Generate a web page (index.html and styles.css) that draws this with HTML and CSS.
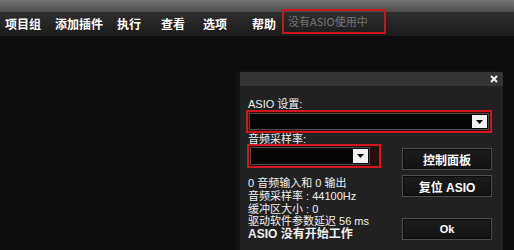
FILE: index.html
```html
<!DOCTYPE html>
<html lang="zh">
<head>
<meta charset="utf-8">
<link rel="stylesheet" href="styles.css">
</head>
<body>
<div class="app">
  <div class="topstrip"></div>
  <div class="menubar">
    <span class="mi mi1">项目组</span>
    <span class="mi mi2">添加插件</span>
    <span class="mi mi3">执行</span>
    <span class="mi mi4">查看</span>
    <span class="mi mi5">选项</span>
    <span class="mi mi6">帮助</span>
    <span class="status">没有ASIO使用中</span>
  </div>
  <div class="workspace"></div>

  <div class="dialog">
    <div class="titlebar"><svg class="close" width="8" height="8" viewBox="0 0 8 8"><path d="M1 1L7 7M7 1L1 7" stroke="#f0f0f0" stroke-width="2"/></svg></div>
    <div class="dbody">
      <div class="label l1">ASIO 设置:</div>
      <div class="redbox wide">
        <div class="select"><span class="drop"><svg width="7" height="4" viewBox="0 0 7 4"><path d="M0 0H7L3.5 4Z" fill="#000"/></svg></span></div>
      </div>
      <div class="label l2">音频采样率:</div>
      <div class="lower">
        <div class="leftcol">
          <div class="redbox narrow">
            <div class="select"><span class="drop"><svg width="7" height="4" viewBox="0 0 7 4"><path d="M0 0H7L3.5 4Z" fill="#000"/></svg></span></div>
          </div>
          <div class="info">
            <div>0 音频输入和 0 输出</div>
            <div>音频采样率 : 44100Hz</div>
            <div>缓冲区大小 : 0</div>
            <div>驱动软件参数延迟 56 ms</div>
            <div class="bold">ASIO 没有开始工作</div>
          </div>
        </div>
        <div class="rightcol">
          <button class="btn">控制面板</button>
          <button class="btn">复位 ASIO</button>
          <button class="btn ok">Ok</button>
        </div>
      </div>
    </div>
  </div>
</div>
</body>
</html>
```

FILE: styles.css
```css
* { box-sizing: border-box; margin: 0; padding: 0; }
html, body { width: 514px; height: 250px; overflow: hidden; background: #0e0e0e; }
body { font-family: "Liberation Sans", "Noto Sans CJK SC", sans-serif; color: #fff; }

.app { position: relative; width: 514px; height: 250px; display: flex; flex-direction: column; }

.topstrip { height: 12px; background: linear-gradient(#747474, #4c4c4c); }

.menubar {
  height: 24px;
  background: linear-gradient(#2e2e2e, #1b1b1b);
  display: flex;
  align-items: center;
  font-family: "Noto Sans CJK SC", sans-serif;
  font-weight: bold;
  font-size: 12px;
  position: relative;
}
.mi { line-height: 24px; }
.mi1 { margin-left: 5px; }
.mi2 { margin-left: 14px; }
.mi3 { margin-left: 14px; }
.mi4 { margin-left: 20px; }
.mi5 { margin-left: 18px; }
.mi6 { margin-left: 25px; }

.status {
  position: absolute;
  left: 282px;
  top: -3px;
  width: 104px;
  height: 25px;
  border: 2px solid #c8161c;
  color: #767676;
  font-weight: normal;
  font-size: 11px;
  line-height: 21px;
  padding-left: 4px;
}

.workspace { flex: 1; background: #0e0e0e; }

.dialog {
  position: absolute;
  left: 240px;
  top: 72px;
  width: 263px;
  height: 190px;
  background: #212121;
  box-shadow: -4px 0 4px rgba(30,30,30,0.5);
}
.titlebar {
  height: 14px;
  background: #353535;
  display: flex;
  justify-content: flex-end;
  align-items: center;
  padding-right: 5px;
}
.close { display: block; }

.dbody { padding: 0 11px 0 6px; display: flex; flex-direction: column; }

.label {
  font-family: "Liberation Sans", "Noto Sans CJK SC", sans-serif;
  font-size: 11px;
  line-height: 12px;
  color: #f0f0f0;
  padding-left: 2px;
}
.l1 { margin-top: 12px; }
.l2 { height: 11px; line-height: 12px; }

.redbox { border: 2px solid #d0161e; background: #3a0d0d; padding: 1px; }
.redbox.wide { width: 246px; height: 23px; }
.redbox.narrow { width: 134px; height: 24px; padding: 1px 9px 1px 1px; background: #2a0e0e; }

.select {
  height: 100%;
  background: #050505;
  border: 1px solid #4a4a4a;
  display: flex;
  justify-content: flex-end;
  align-items: stretch;
  padding: 1px;
}
.drop {
  width: 15px;
  background: #f2f2f2;
  display: flex;
  align-items: center;
  justify-content: center;
}

.lower { display: flex; justify-content: space-between; }
.leftcol { display: flex; flex-direction: column; padding-left: 1px; }
.info {
  margin-top: 9px;
  font-size: 11px;
  line-height: 12.75px;
  color: #f0f0f0;
  padding-left: 1px;
}
.info .bold { font-weight: bold; font-size: 12px; }

.rightcol { display: flex; flex-direction: column; width: 90px; padding-top: 4px; }
.btn {
  height: 22px;
  background: linear-gradient(#1c1c1c, #121212);
  border: 1px solid #4e4e4e;
  color: #fff;
  font-family: "Liberation Sans", "Noto Sans CJK SC", sans-serif;
  font-weight: bold;
  font-size: 12px;
  box-shadow: inset 0 0 0 1px #0a0a0a;
}
.btn + .btn { margin-top: 5px; }
.btn.ok { margin-top: 21px; font-size: 11px; }
```
